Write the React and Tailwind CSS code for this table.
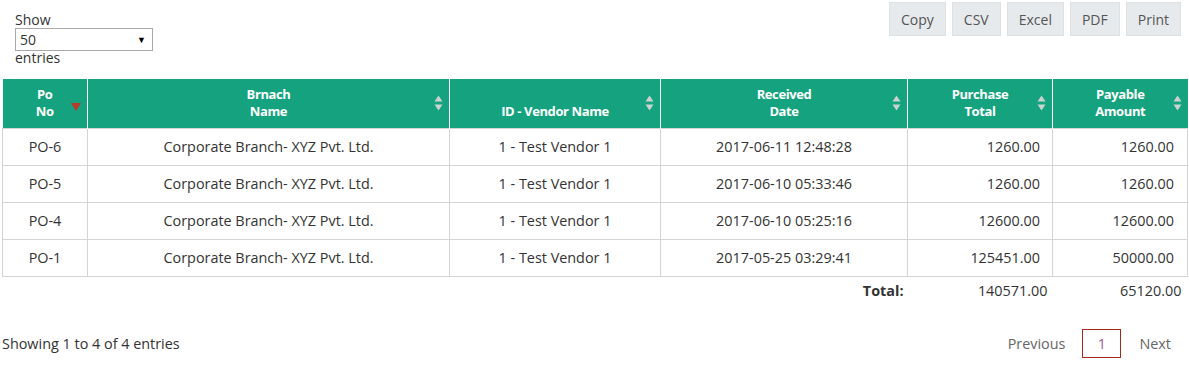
const rows = [
  ["PO-6", "2017-06-11 12:48:28", "1260.00", "1260.00"],
  ["PO-5", "2017-06-10 05:33:46", "1260.00", "1260.00"],
  ["PO-4", "2017-06-10 05:25:16", "12600.00", "12600.00"],
  ["PO-1", "2017-05-25 03:29:41", "125451.00", "50000.00"],
];

const SortBoth = () => (
  <svg width="9" height="17" viewBox="0 0 9 17" className="absolute right-[6px] top-1/2 -translate-y-1/2">
    <path d="M4.5 1 L8.5 7 L0.5 7 Z" fill="#c9d3cf" />
    <path d="M0.5 10 L8.5 10 L4.5 16 Z" fill="#c9d3cf" />
  </svg>
);

const SortDesc = () => (
  <svg width="10" height="8" viewBox="0 0 10 8" className="absolute right-[6px] top-[24px]">
    <path d="M0 0 L10 0 L5 8 Z" fill="#b73a2c" />
  </svg>
);

const Th = ({ children, sort, w }) => (
  <th className={`relative h-[49px] border-r border-white bg-[#14a37e] px-4 text-center align-middle text-[13px] font-bold leading-[17px] tracking-[-0.4px] text-white last:border-r-0 ${w}`}>
    {children}
    {sort === "desc" ? <SortDesc /> : <SortBoth />}
  </th>
);

export default function App() {
  return (
    <div className="bg-white px-[2px] font-['Open_Sans',sans-serif] text-[14.4px] text-[#333]">
      <div className="flex items-start justify-between">
        <div className="ml-[13px] pt-[12px] text-[14px] leading-[15px]">
          <div>Show</div>
          <div className="mt-px flex h-[23px] w-[138px] items-center justify-between border border-[#aaa] pl-[4px] pr-[6px] text-[14px]">
            <span>50</span>
            <span className="text-[9px] text-black">▼</span>
          </div>
          <div className="-mt-px">entries</div>
        </div>
        <div className="mr-[6px] mt-[2px] flex gap-[6px]">
          {["Copy", "CSV", "Excel", "PDF", "Print"].map((b) => (
            <button key={b} className="h-[34px] border border-[#dde1e3] bg-[#e7eaec] px-[11px] text-[14px] text-[#555]">
              {b}
            </button>
          ))}
        </div>
      </div>

      <table className="mt-[14px] w-full table-fixed border-collapse">
        <thead>
          <tr>
            <Th sort="desc" w="w-[85px]">Po<br />No</Th>
            <Th w="w-[362px]">Brnach<br />Name</Th>
            <Th w="w-[211px]"><div className="pt-[17px]">ID - Vendor Name</div></Th>
            <Th w="w-[247px]">Received<br />Date</Th>
            <Th w="w-[145px]">Purchase<br />Total</Th>
            <Th w="w-[135px]">Payable<br />Amount</Th>
          </tr>
        </thead>
        <tbody>
          {rows.map((r) => (
            <tr key={r[0]} className="h-[37px]">
              <td className="border border-[#d4d4d4] text-center">{r[0]}</td>
              <td className="border border-[#d4d4d4] text-center">Corporate Branch- XYZ Pvt. Ltd.</td>
              <td className="border border-[#d4d4d4] text-center">1 - Test Vendor 1</td>
              <td className="border border-[#d4d4d4] text-center">{r[1]}</td>
              <td className="border border-[#d4d4d4] pr-[12px] text-right">{r[2]}</td>
              <td className="border border-[#d4d4d4] pr-[13px] text-right">{r[3]}</td>
            </tr>
          ))}
        </tbody>
        <tfoot>
          <tr className="h-[30px]">
            <td colSpan={4} className="pr-[4px] text-right font-bold">Total:</td>
            <td className="pr-[5px] text-right">140571.00</td>
            <td className="pr-[6px] text-right">65120.00</td>
          </tr>
        </tfoot>
      </table>

      <div className="mt-[23px] flex items-center justify-between pb-[6px]">
        <div>Showing 1 to 4 of 4 entries</div>
        <div className="mr-[16px] flex items-center text-[14.4px] text-[#666]">
          <span className="mr-[17px]">Previous</span>
          <span className="flex h-[29px] w-[39px] items-center justify-center border border-[#a8281e] text-[#a05a8c]">1</span>
          <span className="ml-[18px]">Next</span>
        </div>
      </div>
    </div>
  );
}
